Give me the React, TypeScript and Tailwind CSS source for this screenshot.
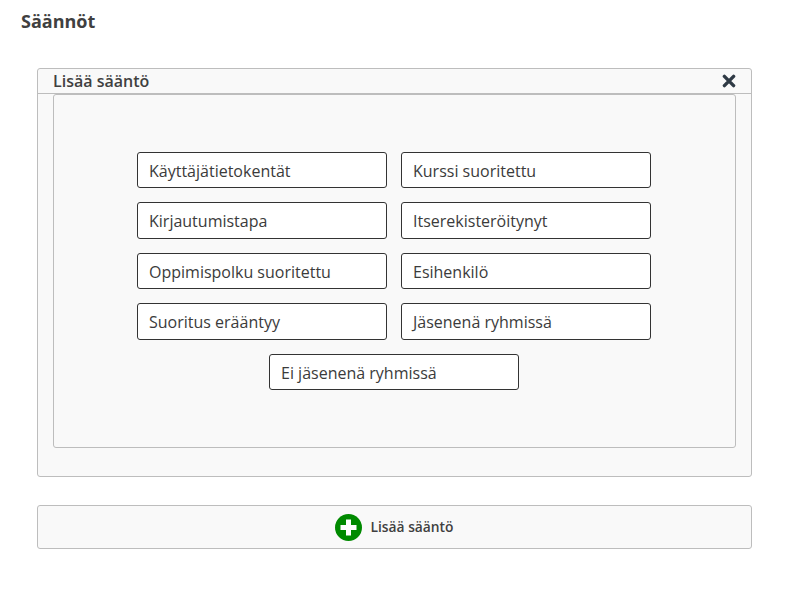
const rules = [
  "Käyttäjätietokentät",
  "Kurssi suoritettu",
  "Kirjautumistapa",
  "Itserekisteröitynyt",
  "Oppimispolku suoritettu",
  "Esihenkilö",
  "Suoritus erääntyy",
  "Jäsenenä ryhmissä",
  "Ei jäsenenä ryhmissä",
];

export default function App() {
  return (
    <div className="min-h-[597px] bg-white font-['Open_Sans',sans-serif] text-[#3b3b3b]">
      <h2 className="pl-[21px] pt-[9px] text-[18px] leading-[24px] font-bold text-[#404040]">Säännöt</h2>

      <div className="ml-[37px] mr-[38px] mt-[35px] h-[409px] rounded-[3px] border border-[#bdbdbd] bg-[#f9f9f9]">
        <div className="flex h-[25px] items-center justify-between border-b border-[#bdbdbd] pl-[15px] pr-[15px]">
          <span className="text-[16px] leading-[24px] font-semibold text-[#404040]">Lisää sääntö</span>
          <svg width="14" height="14" viewBox="0 0 14 14" className="text-[#2f3a45]">
            <path d="M2.4 2.4 L11.6 11.6 M11.6 2.4 L2.4 11.6" stroke="currentColor" strokeWidth="3.4" strokeLinecap="round" />
          </svg>
        </div>
        <div className="mx-[15px] h-[354px] rounded-[3px] border border-[#bdbdbd] pl-[83px] pr-[84px] pt-[56.75px]">
          <div className="flex flex-wrap justify-center gap-x-[14px] gap-y-[14px]">
            {rules.map((rule) => (
              <button
                key={rule}
                className="h-[36.5px] w-[250px] rounded-[3px] border border-[#333333] bg-white pl-[11px] pt-[1px] text-left text-[16px] text-[#3b3b3b]"
              >
                {rule}
              </button>
            ))}
          </div>
        </div>
      </div>

      <button className="ml-[37px] mt-[28px] flex h-[44px] w-[715px] items-center justify-center gap-[8px] rounded-[3px] border border-[#bdbdbd] bg-[#f9f9f9]">
        <svg width="27" height="27" viewBox="0 0 27 27">
          <circle cx="13.5" cy="13.5" r="13.5" fill="#008a00" />
          <path d="M13.5 5.5 V21.5 M5.5 13.5 H21.5" stroke="#fff" strokeWidth="5" />
        </svg>
        <span className="text-[13.8px] font-semibold text-[#404040]">Lisää sääntö</span>
      </button>
    </div>
  );
}
